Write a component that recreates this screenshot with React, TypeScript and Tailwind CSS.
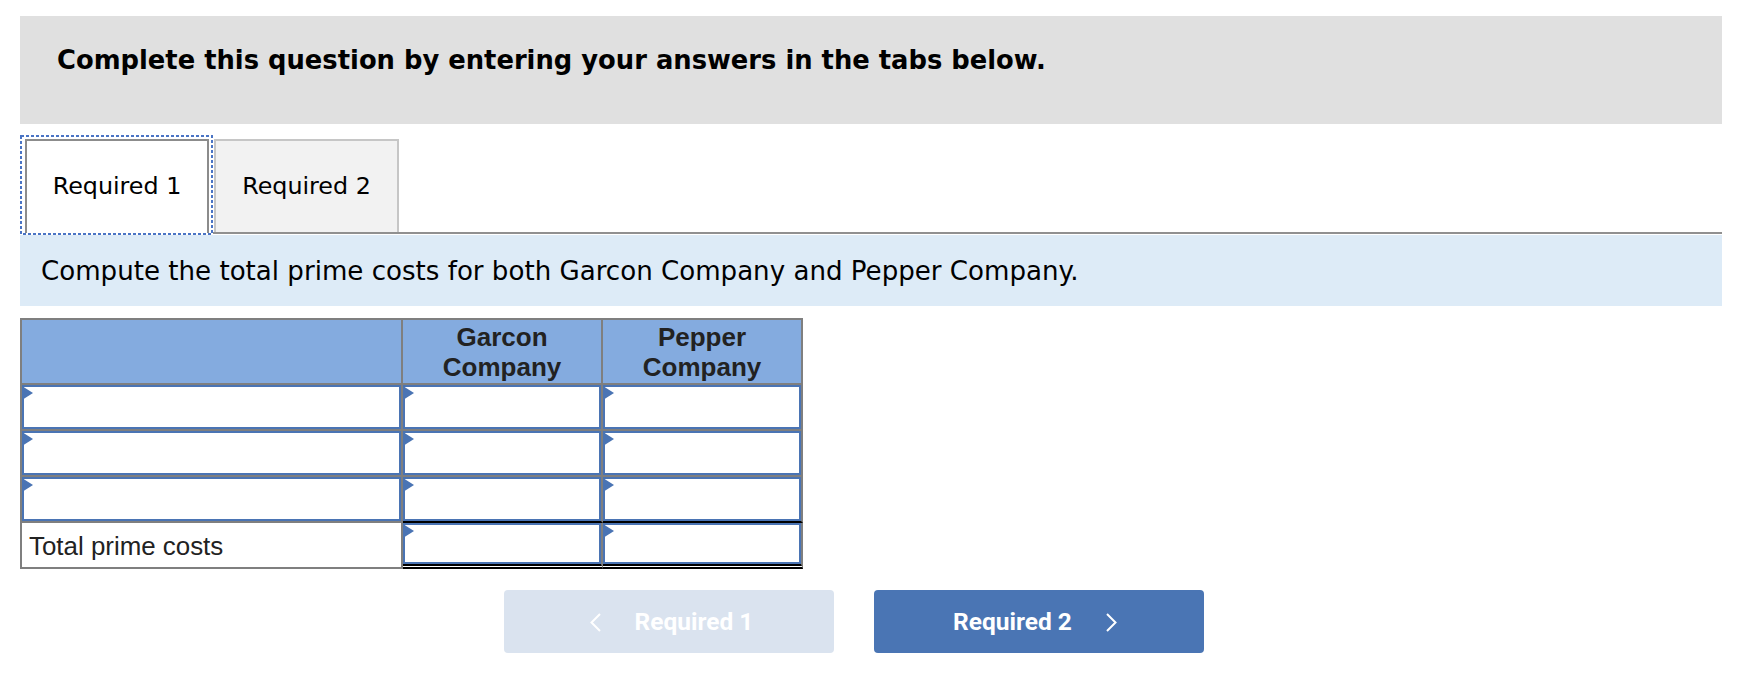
import React from "react";

function Tri() {
  return (
    <svg
      className="absolute -left-[2px] -top-[1px]"
      width="11"
      height="14"
      viewBox="0 0 11 14"
    >
      <polygon points="0,0 11,7 0,14" fill="#4a74b4" />
    </svg>
  );
}

function InputCell({ bottom }: { bottom: "gray" | "black" | "double" }) {
  const b =
    bottom === "gray"
      ? "border-b-2 border-b-[#7f7f7f]"
      : bottom === "black"
      ? "border-b-2 border-b-black"
      : "border-b-[5px] border-double border-b-black";
  return (
    <div className={`border-r-2 border-r-[#7f7f7f] bg-white ${b}`}>
      <div className="relative h-full border-2 border-[#4a74b4] bg-white">
        <Tri />
      </div>
    </div>
  );
}

export default function App() {
  const verdana = { fontFamily: '"DejaVu Sans", Verdana, sans-serif' };
  return (
    <div className="w-[1751px] h-[699px] bg-white pt-[16px] pl-[20px]">
      <div className="w-[1702px]">
        <div
          className="h-[108px] bg-[#e0e0e0] pl-[37px] pt-[29px] text-[25.8px] leading-[30px] font-bold text-black"
          style={verdana}
        >
          Complete this question by entering your answers in the tabs below.
        </div>

        <div className="mt-[11px] flex h-[100px]" style={verdana}>
          <div className="relative w-[193px] h-[100px] pl-[5px] pt-[4px] pr-[4px] pb-[2px]">
            <div className="h-full w-[184px] border-2 border-b-0 border-[#8c8c8c] bg-white flex items-center justify-center text-[23.8px] text-black">
              Required 1
            </div>
            <svg
              className="absolute inset-0 pointer-events-none"
              width="193"
              height="100"
              viewBox="0 0 193 100"
            >
              <rect
                x="1"
                y="1"
                width="191"
                height="98"
                fill="none"
                stroke="#4a74c4"
                strokeWidth="2"
                strokeDasharray="3 2"
              />
            </svg>
          </div>
          <div className="flex-1 h-[99px] border-b-2 border-[#909090] flex items-end pl-[1px]">
            <div className="w-[185px] h-[93px] border-2 border-b-0 border-[#c6c6c6] bg-[#f2f2f2] flex items-center justify-center text-[23.8px] text-black">
              Required 2
            </div>
          </div>
        </div>

        <div
          className="h-[71px] bg-[#ddebf7] pl-[21px] pt-[21px] text-[26.1px] leading-[30px] text-black"
          style={verdana}
        >
          Compute the total prime costs for both Garcon Company and Pepper Company.
        </div>
      </div>

      <div
        className="mt-[12px] w-[783px] grid grid-cols-[381px_200px_200px] grid-rows-[65px_46px_46px_46px_46px] border-l-2 border-t-2 border-[#7f7f7f] text-[#222]"
        style={{ fontFamily: '"Liberation Sans", Arial, sans-serif' }}
      >
        <div className="bg-[#84abdf] border-r-2 border-b-2 border-[#7f7f7f]" />
        <div className="bg-[#84abdf] border-r-2 border-b-2 border-[#7f7f7f] flex items-center justify-center text-center font-bold text-[26px] leading-[30px]">
          Garcon
          <br />
          Company
        </div>
        <div className="bg-[#84abdf] border-r-2 border-b-2 border-[#7f7f7f] flex items-center justify-center text-center font-bold text-[26px] leading-[30px]">
          Pepper
          <br />
          Company
        </div>

        <InputCell bottom="gray" />
        <InputCell bottom="gray" />
        <InputCell bottom="gray" />

        <InputCell bottom="gray" />
        <InputCell bottom="gray" />
        <InputCell bottom="gray" />

        <InputCell bottom="gray" />
        <InputCell bottom="black" />
        <InputCell bottom="black" />

        <div className="bg-white border-r-2 border-b-2 border-[#7f7f7f] flex items-center pl-[7px] pt-[2px] text-[25.9px]">
          Total prime costs
        </div>
        <InputCell bottom="double" />
        <InputCell bottom="double" />
      </div>

      <div
        className="mt-[21px] flex gap-[40px] pl-[484px]"
        style={{ fontFamily: 'Roboto, "Liberation Sans", sans-serif' }}
      >
        <div className="w-[330px] h-[63px] rounded-[4px] bg-[#dae3ef] flex items-center justify-center pl-[4px] pt-[2px] text-white font-bold text-[24.5px]">
          <svg width="13" height="19" viewBox="0 0 13 19" className="mr-[33px]">
            <polyline
              points="11,1 2.5,9.5 11,18"
              fill="none"
              stroke="#ffffff"
              strokeWidth="2"
            />
          </svg>
          <span>Required 1</span>
        </div>
        <div className="w-[330px] h-[63px] rounded-[4px] bg-[#4a75b4] flex items-center justify-center pr-[7px] pt-[2px] text-white font-bold text-[24.5px]">
          <span>Required 2</span>
          <svg width="13" height="19" viewBox="0 0 13 19" className="ml-[33px]">
            <polyline
              points="2,1 10.5,9.5 2,18"
              fill="none"
              stroke="#ffffff"
              strokeWidth="2"
            />
          </svg>
        </div>
      </div>
    </div>
  );
}
